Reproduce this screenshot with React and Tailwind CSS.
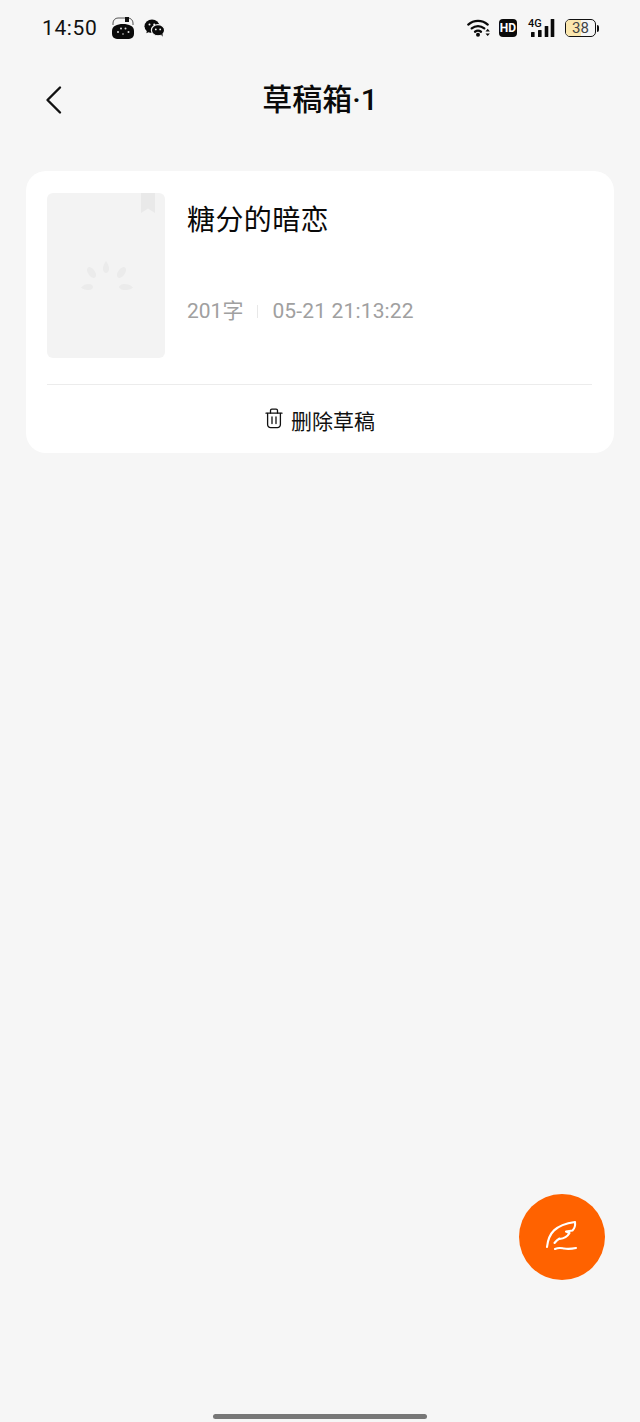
const sans = { fontFamily: '"Roboto", "Noto Sans CJK SC", sans-serif' };

function RobotFace() {
  return (
    <svg width="24" height="24" viewBox="0 0 24 24">
      <path d="M2 9V7a5 5 0 0 1 5-5h10a5 5 0 0 1 5 5v2" fill="none" stroke="#555" strokeWidth="1" />
      <rect x="14" y="1" width="4" height="5" fill="#111" />
      <path d="M1 15c0-5 5-7 11-7s11 2 11 7v3a5 5 0 0 1-5 5H6a5 5 0 0 1-5-5z" fill="#0a0a0a" />
      <circle cx="7" cy="16" r="1" fill="#ddd" />
      <circle cx="10" cy="12.5" r="1" fill="#ddd" />
      <circle cx="14.5" cy="12.5" r="1" fill="#ddd" />
      <circle cx="17.5" cy="16" r="1" fill="#ddd" />
      <circle cx="12" cy="18" r="0.8" fill="#ddd" />
    </svg>
  );
}

function WeChat() {
  return (
    <svg width="21" height="18" viewBox="0 0 21 18">
      <ellipse cx="8" cy="7.2" rx="7.5" ry="6.7" fill="#0a0a0a" />
      <path d="M3 11l-.6 3.2L6 12.5z" fill="#0a0a0a" />
      <ellipse cx="14" cy="11.2" rx="6.6" ry="5.6" fill="#0a0a0a" stroke="#f6f6f6" strokeWidth="1.2" />
      <path d="M17 15.5l1.6 2.3-.1-3.6z" fill="#0a0a0a" />
      <circle cx="5.5" cy="5.5" r="1" fill="#f6f6f6" />
      <circle cx="10.2" cy="5.5" r="1" fill="#f6f6f6" />
      <circle cx="11.8" cy="10.4" r="0.9" fill="#f6f6f6" />
      <circle cx="16.2" cy="10.4" r="0.9" fill="#f6f6f6" />
    </svg>
  );
}

function WifiIcon() {
  return (
    <svg width="24" height="18" viewBox="0 0 24 18">
      <g fill="none" stroke="#0a0a0a" strokeWidth="2.3" strokeLinecap="round">
        <path d="M1.3 5.6C6.8.7 15.2.7 20.7 5.6" />
        <path d="M4.7 9.4c3.7-3.1 8.9-3.1 12.6 0" />
        <path d="M8 12.7c1.8-1.3 4.2-1.3 6 0" />
      </g>
      <circle cx="11" cy="15.8" r="2" fill="#0a0a0a" />
      <path d="M18.5 12.4l2.2-2.6 2.2 2.6zM18.5 14.4l2.2 2.6 2.2-2.6z" fill="#0a0a0a" />
    </svg>
  );
}

function SignalIcon() {
  return (
    <div className="relative w-[27px] h-[18px]">
      <span className="absolute left-0 top-0 text-[11px] leading-[10px] font-medium text-[#0a0a0a]">4G</span>
      <svg width="27" height="18" viewBox="0 0 27 18" className="absolute left-0 top-0">
        <rect x="3" y="13" width="3.6" height="5" rx="0.6" fill="#0a0a0a" />
        <rect x="10" y="11" width="3.6" height="7" rx="0.6" fill="#0a0a0a" />
        <rect x="16.7" y="7" width="3.6" height="11" rx="0.6" fill="#0a0a0a" />
        <rect x="22.7" y="0" width="3.6" height="18" rx="0.6" fill="#0a0a0a" />
      </svg>
    </div>
  );
}

function Battery() {
  return (
    <div className="flex items-center">
      <div className="relative w-[31px] h-[18px] rounded-[5px] border-[1.5px] border-[#111] overflow-hidden bg-[#f6f6f6]">
        <div className="absolute left-0 top-0 bottom-0 w-[15px] bg-[#fbe7ae]" />
        <span className="absolute inset-0 flex items-center justify-center text-[15px] leading-none text-[#444]">38</span>
      </div>
      <div className="w-[2.5px] h-[7px] ml-[0.5px] rounded-r-sm bg-[#111]" />
    </div>
  );
}

function CoverLoader() {
  return (
    <svg width="54" height="30" viewBox="0 0 54 30" fill="#ebebeb">
      <path d="M27 0c2 2.500 3.200 5.500 3 8s-1.400 4-3 4-2.800-1.500-3-4 1-5.500 3-8z" />
      <ellipse cx="12.500" cy="11.500" rx="3.500" ry="6.200" transform="rotate(-35 12.500 11.500)" />
      <ellipse cx="42.500" cy="11.500" rx="3.500" ry="6.200" transform="rotate(35 42.500 11.500)" />
      <path d="M2 26.500c2-2.500 5-3.500 8-3.500 2.500 0 4 1.500 4 3s-1.500 3-4 3c-3 0-6-.5-8-2.500z" />
      <path d="M54 26.500c-2-2.500-5.500-3.500-8.500-3.500-2.500 0-5.500 1.500-5.500 3s3 3 5.500 3c3 0 6.500-.5 8.500-2.500z" />
    </svg>
  );
}

function TrashIcon() {
  return (
    <svg width="18" height="22" viewBox="0 0 18 22" fill="none" stroke="#111" strokeWidth="1.3" strokeLinecap="round" strokeLinejoin="round">
      <path d="M1 5.200h16" />
      <path d="M5.500 5V2.600A1.400 1.400 0 0 1 6.900 1.200h4.200a1.400 1.400 0 0 1 1.400 1.400V5" />
      <path d="M2.600 5.400v11.200a3 3 0 0 0 3 3h6.800a3 3 0 0 0 3-3V5.400" />
      <path d="M7 9v6.500M11 9v6.500" />
    </svg>
  );
}

function QuillIcon() {
  return (
    <svg width="34" height="34" viewBox="0 0 34 34" fill="none" stroke="#fff" strokeWidth="2.100" strokeLinecap="round" strokeLinejoin="round">
      <path d="M2 27C3.500 13 10 5 30 2c.5 4-.5 6.500-2.500 8.500l-6.500 1 3.500 1.500c-2 3.500-5 5.500-10 6" />
      <path d="M14.500 18.500c-2 1-3.500 2.500-5 4.500" />
      <path d="M10 29c4-1.800 6-1 9-.5s7 .5 12-.5" />
    </svg>
  );
}

export default function App() {
  return (
    <div className="relative h-[1422px] w-[640px] flex flex-col overflow-hidden bg-[#f6f6f6]" style={sans}>
      {/* status bar */}
      <div className="flex items-center justify-between h-[56px] pl-[42px] pr-[41px]">
        <div className="flex items-center">
          <span className="text-[21px] leading-none tracking-[0.6px] text-[#111]">14:50</span>
          <div className="ml-[14px] flex items-center gap-[9px]">
            <RobotFace />
            <WeChat />
          </div>
        </div>
        <div className="flex items-center">
          <WifiIcon />
          <div className="ml-[8px] flex items-center justify-center w-[18px] h-[18px] rounded-[4px] bg-[#0a0a0a] text-[12px] font-bold leading-none text-white">HD</div>
          <div className="ml-[11px]"><SignalIcon /></div>
          <div className="ml-[10px]"><Battery /></div>
        </div>
      </div>

      {/* title bar */}
      <header className="relative flex items-center justify-center h-[88px]">
        <svg className="absolute left-[44px] top-[29px]" width="20" height="30" viewBox="0 0 20 30" fill="none" stroke="#111" strokeWidth="2.400" strokeLinecap="round" strokeLinejoin="round">
          <path d="M16 2.500 3.500 15 16 27.500" />
        </svg>
        <h1 className="text-[30px] leading-none font-medium text-[#0a0a0a]">草稿箱·1</h1>
      </header>

      {/* draft list */}
      <main className="px-[26px] pt-[27px]">
        <article className="bg-white rounded-[20px] px-[21px] pt-[22px]">
          <div className="flex gap-[22px]">
            <div className="relative flex items-center justify-center w-[118px] h-[165px] rounded-[6px] bg-[#f3f3f3]">
              <div className="absolute right-[10px] top-0 w-[14px] h-[20px] bg-[#e9e9e9] [clip-path:polygon(0_0,100%_0,100%_100%,50%_78%,0_100%)]" />
              <CoverLoader />
            </div>
            <div className="flex flex-col">
              <h2 className="text-[28px] leading-[36px] tracking-[0.4px] mt-[10px] text-[#0a0a0a]">糖分的暗恋</h2>
              <div className="flex items-center mt-[58px] text-[21px] leading-[28px] text-[#a0a0a0]">
                <span>201字</span>
                <span className="mx-[14px] w-px h-[13px] bg-[#e8e8e8]" />
                <span className="tracking-[0.15px]">05-21 21:13:22</span>
              </div>
            </div>
          </div>
          <div className="mt-[26px] mr-px h-px bg-[#ececec]" />
          <button className="flex w-full items-center justify-center gap-[8px] h-[68px] pt-[7px] text-[21px] leading-none text-[#111]">
            <span className="mb-[7px]"><TrashIcon /></span>
            <span>删除草稿</span>
          </button>
        </article>
      </main>

      {/* compose button */}
      <button className="absolute left-[519px] top-[1194px] flex items-center justify-center w-[86px] h-[86px] rounded-full bg-[#ff6200]">
        <QuillIcon />
      </button>

      {/* gesture bar */}
      <div className="mt-auto mb-[3px] mx-auto w-[214px] h-[5px] rounded-full bg-[#777]" />
    </div>
  );
}
